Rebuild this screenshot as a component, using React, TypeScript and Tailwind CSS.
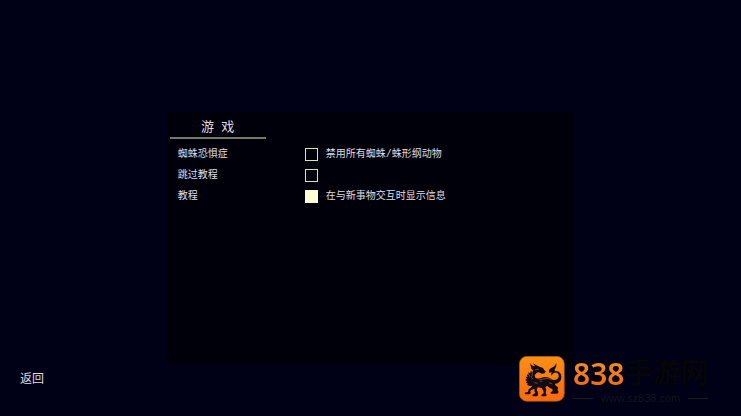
import React from 'react';

const rows = [
  { id: 'arachnophobia', label: '蜘蛛恐惧症', hint: '禁用所有蜘蛛/蛛形纲动物', on: false },
  { id: 'skip', label: '跳过教程', hint: '', on: false },
  { id: 'tutorial', label: '教程', hint: '在与新事物交互时显示信息', on: true },
];

function DragonBadge() {
  return (
    <svg viewBox="0 0 138 138" className="h-[46px] w-[46px] shrink-0" aria-hidden="true">
      <defs>
        <linearGradient id="badge" x1="0" y1="0" x2="0" y2="1">
          <stop offset="0" stopColor="#fb8f16" />
          <stop offset="1" stopColor="#f9690f" />
        </linearGradient>
      </defs>
      <rect x="1" y="1" width="135" height="135" rx="23" fill="url(#badge)" stroke="#9a4c14" strokeWidth="2" />
      <g fill="#120a14">
        <path d="M33 20q5 10 15 11l-6-9q11 8 20 10l10 4 4 7 4 3-3 6-9 1-9-4-7 3-5 6 2 7q9 3 18 0 14-5 25 1l9 5q11 3 16-4 5-8-1-15-6-5-13 0l-6 7q-1-8 1-10l-7 1q-3-9 4-13l9-5q6-4 8-11 1 9-2 14-2 5-5 7l4-1-3 5q13-4 19 7 6 15-4 25-7 6-13 5l1 5 8 6-1 8 3 7-4 4H96l-1-4 6-4-1-6-9-4-7-6-5 5 3 7-2 10 3 6-2 4H68l-1-4 7-5-1-8-5-8-12-2-3 8 4 7v8l-3 4H41l-1-4 9-6-3-6 1-7-9 3-4 4 1 7-3 3H18l-1-5 10-2 2-8 8-6 3-5-8 1-9-4 5-2-8-5 5-2-7-6 6-1-4-8 6 1-3-8 6 2-1-8 6 3 1-7 5 3 3-4-6-6z" />
      </g>
      <path d="M48 42q6-4 11-1M38 47q5 6 1 12t3 11M30 56l3 7M52 66q12 8 22 3 12-5 24 2M46 80l10 2M90 80l10 4M62 75l8 1M55 49l5 2" fill="none" stroke="#b85c1a" strokeWidth="2" />
    </svg>
  );
}

export default function App() {
  return (
    <main className="flex min-h-screen flex-col bg-[#000016] pt-28 font-['Liberation_Sans','Noto_Sans_CJK_SC',sans-serif] text-[#dedee4]">
      <section className="mx-auto h-[253px] w-[55%] bg-[#00000b] pl-[3px] pt-1">
        <h1 className="w-24 whitespace-pre border-b-2 border-[#77776a] text-center text-[13px] leading-[21px]">{'游  戏'}</h1>
        <div className="pt-[5px]">
          {rows.map((row) => (
            <div key={row.id} className="flex h-[21px] items-center pl-2 font-['Liberation_Mono','Noto_Sans_CJK_SC',monospace] text-[10px] leading-[21px]">
              <label htmlFor={row.id} className="w-[127px]">{row.label}</label>
              <input
                id={row.id}
                type="checkbox"
                defaultChecked={row.on}
                className="size-[13px] shrink-0 appearance-none border border-[#e2e2ac] checked:border-[#ffffd7] checked:bg-[#ffffd7]"
              />
              <span className="pl-2">{row.hint}</span>
            </div>
          ))}
        </div>
      </section>
      <footer className="flex grow items-start justify-between pl-5 pr-[33px]">
        <button type="button" className="mt-1 text-xs leading-5">返回</button>
        <div className="-mt-[9px] flex">
          <DragonBadge />
          <div className="ml-2 w-[135px]">
            <div className="flex h-9 items-center whitespace-nowrap">
              <span className="bg-linear-to-b from-[#f7941d] to-[#f0621b] bg-clip-text font-['Noto_Sans',sans-serif] text-3xl font-semibold leading-9 text-transparent">838</span>
              <span className="text-[28px] font-medium leading-7 text-[#040703]">手游网</span>
            </div>
            <div className="mt-px flex items-center justify-between font-['Liberation_Sans',sans-serif] text-[11px] leading-[10px] text-[#12141b]">
              <span className="h-px w-5 bg-[#1d1d1c]" />
              <span>www.sz838.com</span>
              <span className="h-px w-5 bg-[#1d1d1c]" />
            </div>
          </div>
        </div>
      </footer>
    </main>
  );
}
